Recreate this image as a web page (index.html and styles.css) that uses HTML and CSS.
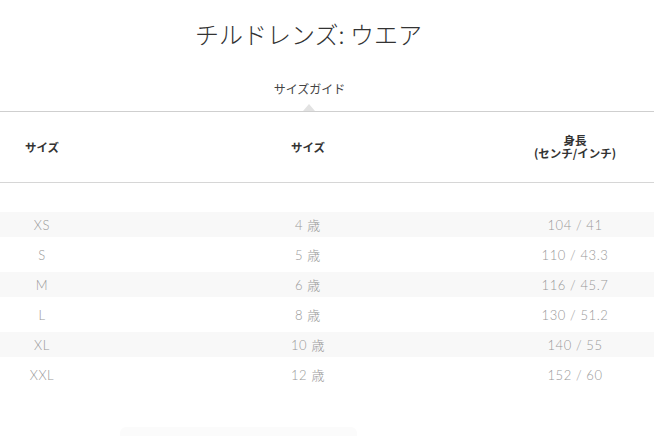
FILE: index.html
```html
<!DOCTYPE html>
<html lang="ja">
<head>
<meta charset="utf-8">
<link rel="stylesheet" href="styles.css">
</head>
<body>
<div class="page">
  <h1 class="title">チルドレンズ: ウエア</h1>
  <div class="tabs">
    <div class="tab">サイズガイド<span class="caret"></span></div>
  </div>
  <div class="head">
    <div class="cell c1">サイズ</div>
    <div class="cell">サイズ</div>
    <div class="cell">身長<br>(センチ/インチ)</div>
    <div></div>
  </div>
  <div class="rows">
    <div class="row alt"><div class="cell">XS</div><div class="cell">4 歳</div><div class="cell">104 / 41</div><div></div></div>
    <div class="row"><div class="cell">S</div><div class="cell">5 歳</div><div class="cell">110 / 43.3</div><div></div></div>
    <div class="row alt"><div class="cell">M</div><div class="cell">6 歳</div><div class="cell">116 / 45.7</div><div></div></div>
    <div class="row"><div class="cell">L</div><div class="cell">8 歳</div><div class="cell">130 / 51.2</div><div></div></div>
    <div class="row alt"><div class="cell">XL</div><div class="cell">10 歳</div><div class="cell">140 / 55</div><div></div></div>
    <div class="row"><div class="cell">XXL</div><div class="cell">12 歳</div><div class="cell">152 / 60</div><div></div></div>
  </div>
  <div class="foot"><div class="ghost"></div></div>
</div>
</body>
</html>
```
FILE: styles.css
```css
html, body { margin: 0; padding: 0; background: #fff; }
body {
  font-family: "Noto Sans CJK JP", "Noto Sans", sans-serif;
  color: #333;
  width: 654px;
  height: 436px;
  overflow: hidden;
}
.page { display: flex; flex-direction: column; }
.title {
  margin: 0;
  padding-top: 17px;
  padding-right: 37px;
  height: 33px;
  line-height: 33px;
  font-size: 24px;
  font-weight: 300;
  text-align: center;
  color: #333;
}
.tabs {
  margin-top: 30px;
  padding-right: 37px;
  border-bottom: 1px solid #cfcfcf;
  display: flex;
  justify-content: center;
}
.tab {
  position: relative;
  font-size: 12px;
  line-height: 18px;
  color: #444;
  padding-bottom: 13px;
  padding-left: 2px;
}
.caret {
  position: absolute;
  left: 50%;
  bottom: 0;
  margin-left: -5px;
  width: 0; height: 0;
  border-left: 6px solid transparent;
  border-right: 6px solid transparent;
  border-bottom: 7px solid #e2e2e2;
}
.head {
  display: grid;
  grid-template-columns: 84px 448px 86px 1fr;
  height: 70px;
  align-items: center;
  border-bottom: 1px solid #d6d6d6;
  font-size: 11.5px;
  font-weight: 700;
  line-height: 13px;
  color: #333;
}
.cell { text-align: center; white-space: nowrap; }
.rows {
  display: flex;
  flex-direction: column;
  gap: 5px;
  margin-top: 29px;
}
.row {
  display: grid;
  grid-template-columns: 84px 448px 86px 1fr;
  height: 25px;
  align-items: center;
  font-family: "Lato", "Noto Sans CJK JP", sans-serif;
  font-weight: 300;
  font-size: 13px;
  letter-spacing: 0.6px;
  color: #999;
}
.row.alt { background: #f8f8f8; }
.foot {
  display: flex;
  padding-top: 40px;
  padding-left: 120px;
}
.ghost {
  width: 237px;
  height: 12px;
  background: #fbfbfb;
  border-radius: 6px 6px 0 0;
}
```
